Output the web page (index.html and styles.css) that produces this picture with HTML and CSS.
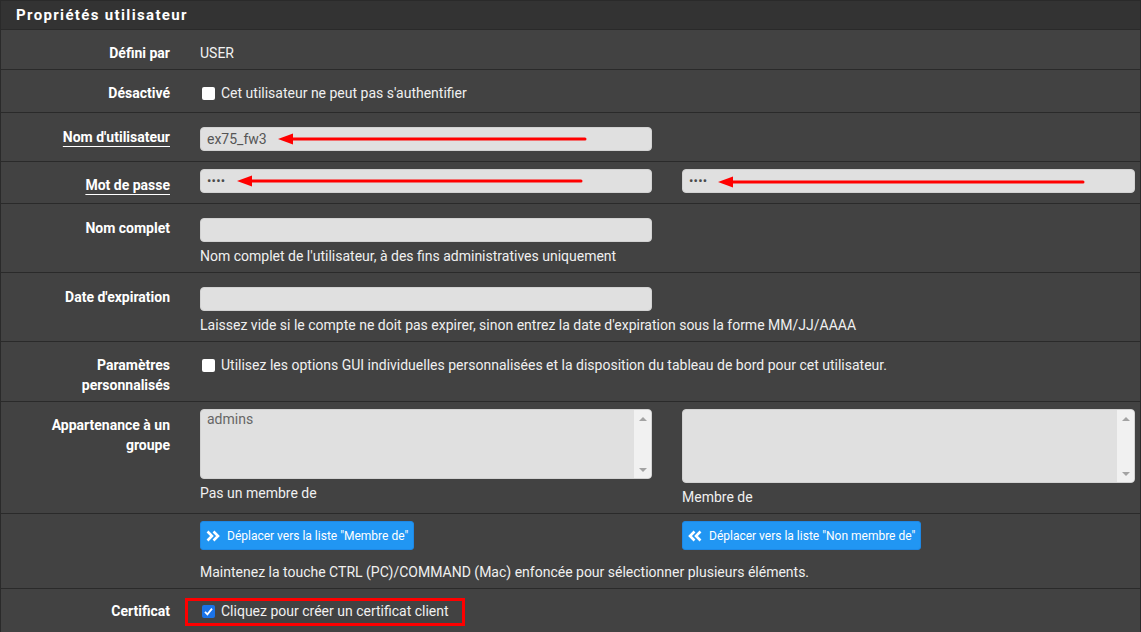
FILE: index.html
```html
<!DOCTYPE html>
<html lang="fr">
<head>
<meta charset="utf-8">
<title>Propriétés utilisateur</title>
<link rel="stylesheet" href="styles.css">
</head>
<body>
<div class="panel">
  <div class="panel-heading"><h2>Propriétés utilisateur</h2></div>
  <div class="panel-body">

    <div class="row r1">
      <div class="lbl">Défini par</div>
      <div class="val">USER</div>
    </div>

    <div class="row r2">
      <div class="lbl">Désactivé</div>
      <div class="val"><label class="check"><span class="cb"></span>Cet utilisateur ne peut pas s'authentifier</label></div>
    </div>

    <div class="row r3">
      <div class="lbl"><span class="req">Nom d'utilisateur</span></div>
      <div class="val half">
        <div class="field-wrap">
          <input class="field" type="text" value="ex75_fw3" readonly>
          <svg class="arrow" width="320" height="12" viewBox="0 0 320 12"><path d="M0 6 L15 0.5 L15 11.5 Z" fill="#f00"/><path d="M14 6 L307 6" stroke="#f00" stroke-width="3" stroke-linecap="round"/></svg>
        </div>
      </div>
    </div>

    <div class="row r4">
      <div class="lbl"><span class="req">Mot de passe</span></div>
      <div class="val two">
        <div class="field-wrap">
          <div class="field pw">••••</div>
          <svg class="arrow a2" width="360" height="12" viewBox="0 0 360 12"><path d="M0 6 L15 0.5 L15 11.5 Z" fill="#f00"/><path d="M14 6 L344 6" stroke="#f00" stroke-width="3" stroke-linecap="round"/></svg>
        </div>
        <div class="field-wrap">
          <div class="field pw">••••</div>
          <svg class="arrow a3" width="380" height="12" viewBox="0 0 380 12"><path d="M0 6 L15 0.5 L15 11.5 Z" fill="#f00"/><path d="M14 6 L365 6" stroke="#f00" stroke-width="3" stroke-linecap="round"/></svg>
        </div>
      </div>
    </div>

    <div class="row r5">
      <div class="lbl">Nom complet</div>
      <div class="val half">
        <input class="field" type="text" value="" readonly>
        <div class="help">Nom complet de l'utilisateur, à des fins administratives uniquement</div>
      </div>
    </div>

    <div class="row r5">
      <div class="lbl">Date d'expiration</div>
      <div class="val">
        <input class="field narrow" type="text" value="" readonly>
        <div class="help">Laissez vide si le compte ne doit pas expirer, sinon entrez la date d'expiration sous la forme MM/JJ/AAAA</div>
      </div>
    </div>

    <div class="row r7">
      <div class="lbl">Paramètres<br>personnalisés</div>
      <div class="val"><label class="check"><span class="cb"></span>Utilisez les options GUI individuelles personnalisées et la disposition du tableau de bord pour cet utilisateur.</label></div>
    </div>

    <div class="row r8">
      <div class="lbl">Appartenance à un<br>groupe</div>
      <div class="val two">
        <div>
          <div class="listbox">
            <div class="items">admins</div>
            <div class="sb"><span class="up"></span><span class="down"></span></div>
          </div>
          <div class="help">Pas un membre de</div>
        </div>
        <div>
          <div class="listbox tall">
            <div class="items"></div>
            <div class="sb"><span class="up"></span><span class="down"></span></div>
          </div>
          <div class="help">Membre de</div>
        </div>
      </div>
    </div>

    <div class="row r9">
      <div class="lbl"></div>
      <div class="val">
        <div class="two">
          <div><button class="btn" type="button"><svg width="14" height="12" viewBox="0 0 14 12"><path d="M1.5 1.5 L6 6 L1.5 10.5 M7.5 1.5 L12 6 L7.5 10.5" fill="none" stroke="#fff" stroke-width="2.6" stroke-linejoin="miter"/></svg>Déplacer vers la liste "Membre de"</button></div>
          <div><button class="btn" type="button"><svg width="14" height="12" viewBox="0 0 14 12"><path d="M6.5 1.5 L2 6 L6.5 10.5 M12.5 1.5 L8 6 L12.5 10.5" fill="none" stroke="#fff" stroke-width="2.6" stroke-linejoin="miter"/></svg>Déplacer vers la liste "Non membre de"</button></div>
        </div>
        <div class="help h9">Maintenez la touche CTRL (PC)/COMMAND (Mac) enfoncée pour sélectionner plusieurs éléments.</div>
      </div>
    </div>

    <div class="row r10">
      <div class="lbl">Certificat</div>
      <div class="val">
        <div class="cert">
          <label class="check"><span class="cb on"><svg width="13" height="13" viewBox="0 0 13 13"><path d="M3 6.8 L5.4 9.3 L10 3.6" fill="none" stroke="#fff" stroke-width="1.8"/></svg></span>Cliquez pour créer un certificat client</label>
          <span class="redbox"></span>
        </div>
      </div>
    </div>

  </div>
</div>
</body>
</html>
```

FILE: styles.css
```css
* { box-sizing: border-box; }

html, body {
  margin: 0;
  background: #424242;
}

body {
  font-family: Roboto, "Liberation Sans", sans-serif;
  font-size: 14px;
  color: #ffffff;
  overflow: hidden;
}

.panel {
  width: 1141px;
  border-left: 1px solid #2a2a2a;
  border-right: 1px solid #2a2a2a;
}

.panel-heading {
  height: 30px;
  background: #333333;
  border-top: 1px solid #2a2a2a;
  border-bottom: 1px solid #2a2a2a;
  padding-left: 15px;
  display: flex;
  align-items: center;
}

.panel-heading h2 {
  margin: 0;
  font-family: Roboto, "Liberation Sans", sans-serif;
  font-size: 15px;
  font-weight: 700;
  letter-spacing: 1.35px;
  color: #ffffff;
}

.row {
  display: grid;
  grid-template-columns: 169px 935px;
  column-gap: 30px;
  border-bottom: 1px solid #2a2a2a;
  padding-top: 13px;
  padding-bottom: 6px;
}

.lbl {
  text-align: right;
  font-weight: 700;
  line-height: 20px;
  color: #ffffff;
}

.val {
  line-height: 20px;
  color: #f2f2f2;
}

.req {
  text-decoration: underline;
  text-underline-offset: 4px;
  text-decoration-thickness: 1px;
}

.r2 { padding-bottom: 9px; }

.r3 { padding-top: 14px; padding-bottom: 10px; }

.r4 { padding-top: 7px; padding-bottom: 10px; }
.r4 .lbl { padding-top: 6px; height: 24px; }

.r5 { padding-top: 14px; padding-bottom: 6px; }

.r8 { padding-top: 7px; padding-bottom: 6px; }
.r8 .lbl { padding-top: 6px; }

.r9 { padding-top: 7px; padding-bottom: 6px; }

.r10 { padding-top: 12px; padding-bottom: 11px; }

.half { width: 452px; }

.two {
  display: grid;
  grid-template-columns: 452px 453px;
  column-gap: 30px;
}

.field-wrap { position: relative; }

.field {
  display: block;
  width: 100%;
  height: 24px;
  margin: 0;
  padding: 0 6px;
  background: #e0e0e0;
  border: 1px solid #d2d2d2;
  border-radius: 4px;
  font-family: Roboto, "Liberation Sans", sans-serif;
  font-size: 14px;
  color: #555555;
  outline: none;
}

.field.narrow { width: 452px; }

.pw {
  font-size: 13px;
  line-height: 21px;
  letter-spacing: 0.2px;
  color: #4a4a4a;
}

.arrow {
  position: absolute;
  left: 78px;
  top: 6px;
  overflow: visible;
}

.arrow.a2 { left: 37px; }
.arrow.a3 { left: 36px; top: 7px; }

.help {
  margin-top: 4px;
  line-height: 20px;
  color: #f0f0f0;
}

.h9 { margin-top: 12px; }

.check {
  display: flex;
  align-items: center;
  gap: 6px;
  line-height: 20px;
  color: #f0f0f0;
}

.cb {
  flex: 0 0 13px;
  width: 13px;
  height: 13px;
  margin-left: 2px;
  margin-top: 1px;
  background: #ffffff;
  border-radius: 2px;
  display: inline-flex;
}

.cb.on { background: #1a73e8; }

.listbox {
  display: flex;
  height: 70px;
  background: #e0e0e0;
  border: 1px solid #d2d2d2;
  border-radius: 4px;
  overflow: hidden;
}

.listbox.tall { height: 74px; }

.items {
  flex: 1;
  padding: 0 6px;
  line-height: 18px;
  font-family: Roboto, "Liberation Sans", sans-serif;
  font-size: 14px;
  color: #666666;
}

.sb {
  width: 17px;
  background: #f1f1f1;
  display: flex;
  flex-direction: column;
  justify-content: space-between;
  align-items: center;
  padding: 7px 0 6px;
}

.sb .up, .sb .down {
  width: 0;
  height: 0;
  border-left: 4px solid transparent;
  border-right: 4px solid transparent;
}

.sb .up { border-bottom: 4px solid #a3a3a3; }
.sb .down { border-top: 4px solid #a3a3a3; }

.btn {
  display: inline-flex;
  align-items: center;
  gap: 7px;
  height: 29px;
  padding: 0 5px 0 5px;
  background: #2196f3;
  border: 1px solid #1e88e5;
  border-radius: 3px;
  color: #ffffff;
  font-family: Roboto, "Liberation Sans", sans-serif;
  font-size: 12px;
  cursor: pointer;
}

.cert {
  position: relative;
  display: inline-block;
}

.redbox {
  position: absolute;
  left: -15px;
  top: -3px;
  width: 280px;
  height: 28px;
  border: 3px solid #ff0000;
}
```
